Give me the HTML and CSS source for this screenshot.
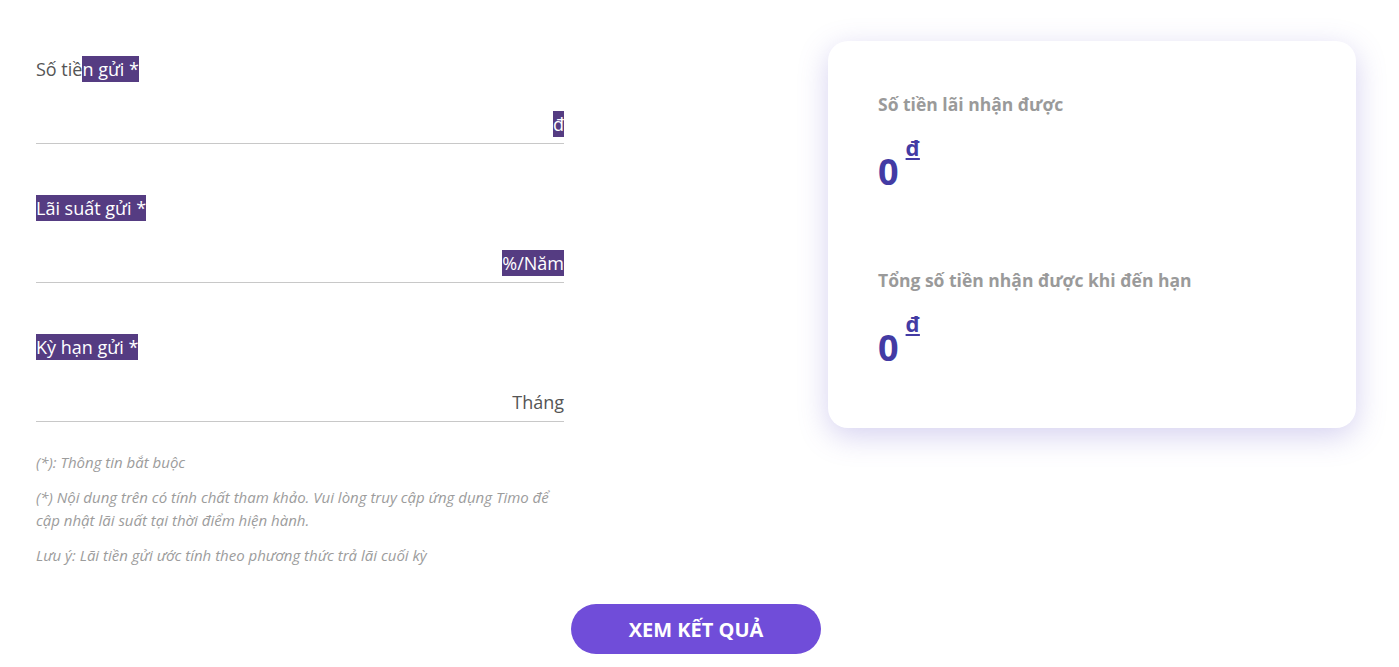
FILE: index.html
```html
<!DOCTYPE html>
<html lang="vi">
<head>
<meta charset="utf-8">
<title>Tính lãi tiền gửi</title>
<link rel="stylesheet" href="styles.css">
</head>
<body>
<div class="page">
  <div class="layout">
    <form class="form">
      <div class="field">
        <div class="label">Số tiề<span class="sel">n gửi *</span></div>
        <div class="input-row"><span class="unit"><span class="sel">đ</span></span></div>
      </div>
      <div class="field">
        <div class="label"><span class="sel">Lãi suất gửi *</span></div>
        <div class="input-row"><span class="unit"><span class="sel">%/Năm</span></span></div>
      </div>
      <div class="field">
        <div class="label"><span class="sel">Kỳ hạn gửi *</span></div>
        <div class="input-row"><span class="unit">Tháng</span></div>
      </div>
      <div class="notes">
        <p>(*): Thông tin bắt buộc</p>
        <p>(*) Nội dung trên có tính chất tham khảo. Vui lòng truy cập ứng dụng Timo để cập nhật lãi suất tại thời điểm hiện hành.</p>
        <p>Lưu ý: Lãi tiền gửi ước tính theo phương thức trả lãi cuối kỳ</p>
      </div>
    </form>
    <div class="card">
      <div class="result">
        <div class="result-title">Số tiền lãi nhận được</div>
        <div class="result-value">0<span class="cur">đ</span></div>
      </div>
      <div class="result">
        <div class="result-title">Tổng số tiền nhận được khi đến hạn</div>
        <div class="result-value">0<span class="cur">đ</span></div>
      </div>
    </div>
  </div>
  <div class="actions">
    <button class="btn" type="button">XEM KẾT QUẢ</button>
  </div>
</div>
</body>
</html>
```

FILE: styles.css
```css
* { box-sizing: border-box; }
html, body { margin: 0; padding: 0; background: #fff; }
body {
  font-family: "Open Sans", "Noto Sans", sans-serif;
  color: #555;
  overflow: hidden;
}
.page { padding: 41px 43px 0 36px; width: 1399px; }
.layout { display: flex; gap: 264px; align-items: flex-start; }
.form { width: 528px; padding-top: 15px; }
.field { margin-bottom: 51px; }
.field:nth-child(3) { margin-bottom: 29px; }
.label { font-size: 18px; line-height: 26px; height: 26px; color: #555; }
.sel { display: inline-block; background: #553c82; color: #fff; line-height: 26px; }
.input-row {
  margin-top: 29px;
  border-bottom: 1px solid #c8c8c8;
  height: 33px;
  display: flex;
  justify-content: flex-end;
  align-items: flex-start;
}
.unit { font-size: 18px; line-height: 26px; color: #555; }
.notes { font-style: italic; font-size: 15px; color: #9c9c9c; }
.notes p { margin: 0 0 12px; line-height: 23px; }
.card {
  width: 528px;
  height: 387px;
  background: #fff;
  border-radius: 20px;
  box-shadow: 0 8px 30px rgba(104, 88, 200, 0.28);
  padding: 50px 50px 0 50px;
}
.result { margin-bottom: 73px; }
.result-title { font-size: 17.5px; font-weight: 700; color: #9a9a9a; line-height: 26px; }
.result-value {
  margin-top: 33px;
  font-size: 36px;
  font-weight: 700;
  color: #433ba4;
  line-height: 44px;
  display: flex;
  align-items: flex-start;
}
.cur {
  font-size: 22px;
  line-height: 26px;
  text-decoration: underline;
  text-decoration-thickness: 2px;
  text-underline-offset: 2px;
  margin-left: 7px;
  margin-top: -16px;
}
.actions { display: flex; justify-content: center; margin-top: 25px; }
.btn {
  width: 250px;
  height: 50px;
  border: none;
  border-radius: 25px;
  background: #704dd9;
  color: #fff;
  font-family: "Open Sans", sans-serif;
  font-weight: 700;
  font-size: 20px;
}
```
